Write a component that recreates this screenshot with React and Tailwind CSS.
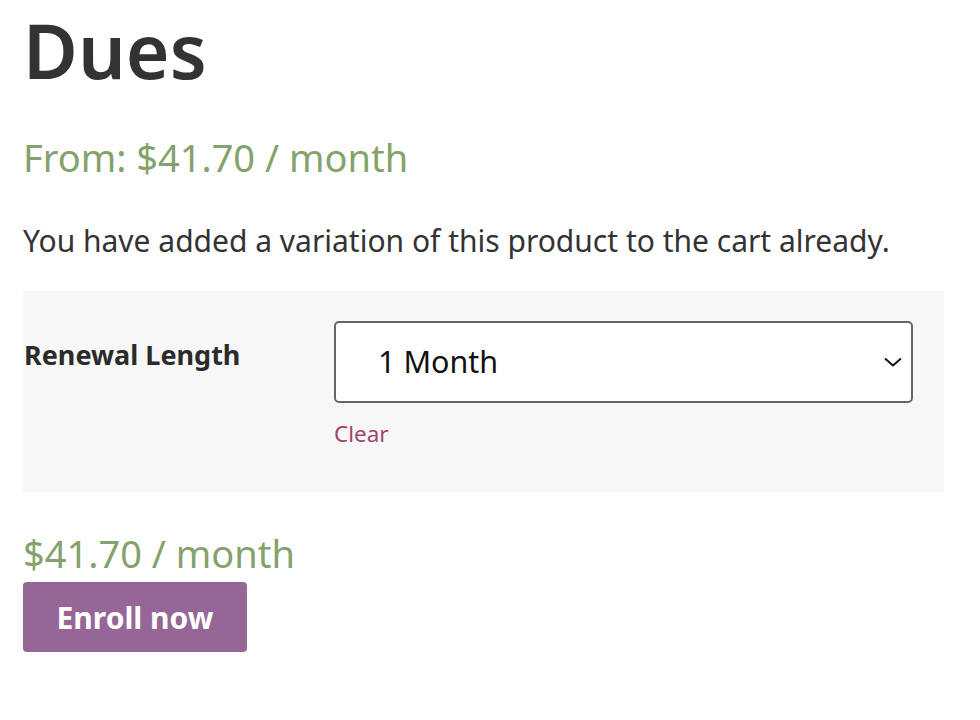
import React, { useState } from 'react';

const Chevron = () => (
  <svg width="18" height="10" viewBox="0 0 18 10" fill="none">
    <path d="M1 1.5L9 8.5L17 1.5" stroke="#111" strokeWidth="2" />
  </svg>
);

const App = () => {
  const [length, setLength] = useState('1 Month');

  return (
    <div className="min-h-screen bg-white pl-[23px] pr-[36px] text-[#333]" style={{ fontFamily: '"Noto Sans", sans-serif' }}>
      <h1 className="pt-[2px] text-[75px] leading-[96px] font-semibold text-[#333]">Dues</h1>
      <p className="mt-[37px] text-[38px] leading-[44px] text-[#84a26b]">From: $41.70 / month</p>
      <p className="mt-[42px] text-[30px] leading-[40px] text-[#333]">You have added a variation of this product to the cart already.</p>

      <div className="mt-[30px] h-[201px] w-[921px] bg-[#f7f7f7] flex">
        <div className="w-[311px] pl-[1px] pt-[47px]">
          <label className="text-[27px] leading-[34px] font-bold text-[#2b2b2b]">Renewal Length</label>
        </div>
        <div className="pt-[30px]">
          <div className="relative w-[579px] h-[82px] rounded-[5px] border-2 border-[#666] bg-white flex items-center pl-[42px]">
            <span className="text-[30.5px] text-[#111]">{length}</span>
            <span className="absolute right-[9px] top-[34px]"><Chevron /></span>
          </div>
          <button onClick={() => setLength('1 Month')} className="mt-[17px] block text-[22.5px] leading-[28px] text-[#a0466c]">Clear</button>
        </div>
      </div>

      <p className="mt-[39px] text-[38px] leading-[44px] text-[#84a26b]">$41.70 / month</p>
      <button className="mt-[7px] h-[70px] w-[224px] rounded-[4px] bg-[#966796] text-white text-[30px] font-bold">Enroll now</button>
    </div>
  );
};

export default App;
